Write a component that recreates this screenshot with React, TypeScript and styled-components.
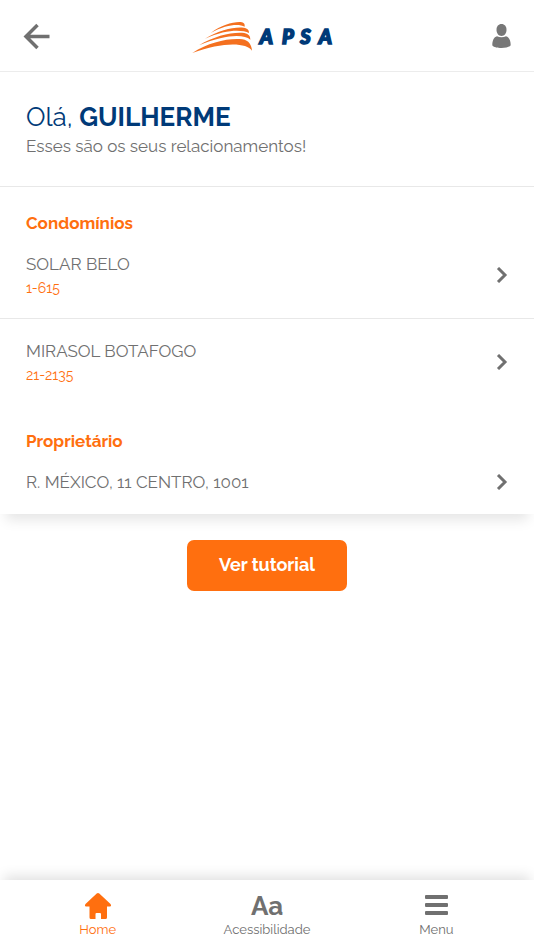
import React from "react";
import styled, { createGlobalStyle } from "styled-components";

const orange = "#ff6f0f";
const grey = "#707070";
const navy = "#003a78";

const GlobalStyle = createGlobalStyle`
  *, *::before, *::after { box-sizing: border-box; }
  body {
    margin: 0;
    background: #fff;
    color: ${grey};
    font-family: Raleway, Lato, "Open Sans", sans-serif;
  }
  button { font: inherit; color: inherit; }
`;

const Page = styled.div`
  display: flex;
  flex-direction: column;
  min-height: 100vh;
`;

const Header = styled.header`
  display: flex;
  align-items: center;
  justify-content: space-between;
  height: 72px;
  padding: 0 18px 0 20px;
  border-bottom: 1px solid #ececec;
  box-shadow: 0 3px 8px rgba(0, 0, 0, 0.03);
`;

const IconButton = styled.button`
  display: flex;
  align-items: center;
  justify-content: center;
  width: 32px;
  height: 32px;
  padding: 0;
  border: 0;
  background: none;
  cursor: pointer;
`;

const Logo = styled.svg`
  display: block;
  width: 154px;
  height: 36px;
`;

const LogoText = styled.text`
  fill: ${navy};
  stroke: ${navy};
  stroke-width: 5px;
  font: italic 900 60px Lato, sans-serif;
`;

const Card = styled.main`
  background: #fff;
  box-shadow: 0 12px 12px -6px rgba(0, 0, 0, 0.1);
`;

const Intro = styled.section`
  padding: 28px 26px;
  border-bottom: 1px solid #e8e8e8;
`;

const Greeting = styled.h1`
  margin: 0;
  color: ${navy};
  font-size: 26px;
  font-weight: 400;
  line-height: 34px;
`;

const Subtitle = styled.p`
  margin: 0;
  font-size: 17px;
  line-height: 24px;
`;

const GroupTitle = styled.h2`
  margin: 0;
  padding: 27px 26px 0;
  color: ${orange};
  font-size: 17px;
  font-weight: 700;
  line-height: 18px;
`;

const List = styled.ul`
  margin: 0;
  padding: 0;
  list-style: none;
`;

const Item = styled.li`
  & + & { border-top: 1px solid #e8e8e8; }
`;

const Row = styled.button`
  display: flex;
  align-items: center;
  justify-content: space-between;
  width: 100%;
  padding: 19px 26px;
  border: 0;
  background: none;
  text-align: left;
  cursor: pointer;
`;

const RowText = styled.span`
  display: flex;
  flex-direction: column;
`;

const RowName = styled.span`
  font-size: 17px;
  line-height: 26px;
`;

const RowCode = styled.span`
  color: ${orange};
  font-size: 14px;
  line-height: 22px;
`;

const Chevron = styled.svg`
  flex: none;
  width: 12px;
  height: 16px;
`;

const Actions = styled.div`
  display: flex;
  justify-content: center;
  padding: 26px;
`;

const TutorialButton = styled.button`
  min-width: 160px;
  padding: 13px 24px 14px;
  border: 0;
  border-radius: 7px;
  background: ${orange};
  color: #fff;
  font-size: 18px;
  font-weight: 700;
  line-height: 24px;
  cursor: pointer;
`;

const BottomNav = styled.nav`
  display: flex;
  margin-top: auto;
  padding: 12px 13px 10px;
  background: #fff;
  box-shadow: 0 -8px 12px -4px rgba(0, 0, 0, 0.12);
`;

const NavLink = styled.a<{ $active?: boolean }>`
  display: flex;
  flex: 1;
  flex-direction: column;
  align-items: center;
  color: ${({ $active }) => ($active ? orange : grey)};
  font-size: 13px;
  line-height: 20px;
  text-decoration: none;
`;

const NavIcon = styled.span`
  display: flex;
  align-items: center;
  justify-content: center;
  height: 28px;
  font-size: 26px;
  font-weight: 700;
`;

const relations = [
  {
    title: "Condomínios",
    items: [
      { name: "SOLAR BELO", code: "1-615" },
      { name: "MIRASOL BOTAFOGO", code: "21-2135" },
    ],
  },
  { title: "Proprietário", items: [{ name: "R. MÉXICO, 11 CENTRO, 1001", code: "" }] },
];

function ApsaLogo() {
  return (
    <Logo viewBox="0 0 462 108" role="img" aria-label="APSA">
      <g fill="#f4701f">
        <path d="M4 105C55 73 110 60 154 64C174 67 182 82 183 98C166 73 95 71 4 105Z" />
        <path d="M24 82C72 53 125 41 160 45C174 48 178 55 178 65C159 49 105 48 24 82Z" />
        <path d="M42 62C85 36 128 26 158 29C170 31 174 36 174 45C152 34 104 34 42 62Z" />
        <path d="M59 45C91 21 124 11 149 12C159 13 162 18 161 26C142 17 105 20 59 45Z" />
      </g>
      <LogoText y="79" x="206 273 328 383">APSA</LogoText>
    </Logo>
  );
}

export default function App() {
  return (
    <Page>
      <GlobalStyle />
      <Header>
        <IconButton aria-label="Voltar">
          <svg width="32" height="32" viewBox="0 0 32 32" fill="none" stroke={grey} strokeWidth="3.5">
            <path d="M17.5 5 6 16.5 17.5 28M6 16.5H29.500" />
          </svg>
        </IconButton>
        <ApsaLogo />
        <IconButton aria-label="Perfil">
          <svg width="32" height="32" viewBox="0 0 32 32" fill="#777">
            <path d="M17.500 4c3 0 5 2.200 5 5.800s-2 6.200-5 6.200-5-2.600-5-6.200S14.500 4 17.500 4Z" />
            <path d="M13 16.200c2.600 1.500 6.400 1.500 9 0 3.200.8 4.700 4.500 4.700 9-2 3.700-16.400 3.700-18.400 0 0-4.500 1.500-8.200 4.700-9Z" />
          </svg>
        </IconButton>
      </Header>
      <Card>
        <Intro>
          <Greeting>
            Olá, <strong>GUILHERME</strong>
          </Greeting>
          <Subtitle>Esses são os seus relacionamentos!</Subtitle>
        </Intro>
        {relations.map((group) => (
          <section key={group.title}>
            <GroupTitle>{group.title}</GroupTitle>
            <List>
              {group.items.map((item) => (
                <Item key={item.name}>
                  <Row>
                    <RowText>
                      <RowName>{item.name}</RowName>
                      {item.code && <RowCode>{item.code}</RowCode>}
                    </RowText>
                    <Chevron viewBox="0 0 12 16" fill="none" stroke={grey} strokeWidth="3">
                      <path d="M2 1 9 8 2 15" />
                    </Chevron>
                  </Row>
                </Item>
              ))}
            </List>
          </section>
        ))}
      </Card>
      <Actions>
        <TutorialButton>Ver tutorial</TutorialButton>
      </Actions>
      <BottomNav>
        <NavLink href="#home" $active>
          <NavIcon>
            <svg width="28" height="28" viewBox="0 0 28 28" fill={orange}>
              <path d="M12.700 1.500Q14 .3 15.300 1.500L26.500 12Q27.800 14 26 14.500H23V25.500Q23 27 21.500 27H17V22Q17 21 16 21H12.500Q11.500 21 11.500 22V27H7Q5.500 27 5.500 25.500V14.500H2Q.2 14 1.500 12Z" />
            </svg>
          </NavIcon>
          Home
        </NavLink>
        <NavLink href="#acessibilidade">
          <NavIcon aria-hidden="true">Aa</NavIcon>
          Acessibilidade
        </NavLink>
        <NavLink href="#menu">
          <NavIcon>
            <svg width="24" height="28" viewBox="0 0 24 28" fill={grey}>
              <rect x="1" y="3" width="23" height="4" rx="1" />
              <rect x="1" y="11" width="23" height="4" rx="1" />
              <rect x="1" y="19" width="23" height="4" rx="1" />
            </svg>
          </NavIcon>
          Menu
        </NavLink>
      </BottomNav>
    </Page>
  );
}
